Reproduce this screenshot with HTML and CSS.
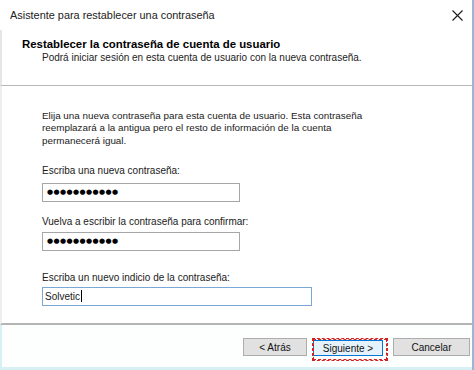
FILE: index.html
```html
<!DOCTYPE html>
<html lang="es">
<head>
<meta charset="utf-8">
<title>Asistente para restablecer una contraseña</title>
<link rel="stylesheet" href="styles.css">
</head>
<body>
<div class="window">
  <div class="titlebar">
    <span class="title">Asistente para restablecer una contraseña</span>
    <svg class="close" width="11" height="11" viewBox="0 0 11 11"><path d="M0.5 0.5L10.5 10.5M10.5 0.5L0.5 10.5" stroke="#1a1a1a" stroke-width="1.1" fill="none"/></svg>
  </div>
  <div class="header">
    <div class="h-title">Restablecer la contraseña de cuenta de usuario</div>
    <div class="h-sub">Podrá iniciar sesión en esta cuenta de usuario con la nueva contraseña.</div>
  </div>
  <div class="content">
    <p class="intro">Elija una nueva contraseña para esta cuenta de usuario. Esta contraseña<br>reemplazará a la antigua pero el resto de información de la cuenta<br>permanecerá igual.</p>
    <div class="field f1">
      <label class="lbl">Escriba una nueva contraseña:</label>
      <div class="input pw">●●●●●●●●●●●</div>
    </div>
    <div class="field f2">
      <label class="lbl">Vuelva a escribir la contraseña para confirmar:</label>
      <div class="input pw">●●●●●●●●●●●</div>
    </div>
    <div class="field f3">
      <label class="lbl">Escriba un nuevo indicio de la contraseña:</label>
      <div class="input wide focus">Solvetic<span class="caret"></span></div>
    </div>
  </div>
  <div class="footer">
    <div class="btn back">&lt; Atrás</div>
    <div class="focusring"><div class="btn primary">Siguiente &gt;</div></div>
    <div class="btn cancel">Cancelar</div>
  </div>
</div>
</body>
</html>
```
FILE: styles.css
```css
html, body {
  margin: 0;
  padding: 0;
  background: #ffffff;
}
body {
  width: 474px;
  height: 370px;
  overflow: hidden;
  font-family: "Liberation Sans", Arial, sans-serif;
  font-size: 10px;
  color: #1a1a1a;
}
.window {
  box-sizing: border-box;
  width: 474px;
  height: 370px;
  border-right: 2px solid #9bb6d2;
  display: flex;
  flex-direction: column;
}
.titlebar {
  height: 30px;
  display: flex;
  align-items: center;
  justify-content: space-between;
  padding: 0 9px 0 10px;
  flex: none;
}
.title {
  font-family: "Liberation Sans", Arial, sans-serif;
  font-size: 10.9px;
  color: #222;
}
.header {
  height: 56px;
  box-sizing: border-box;
  border-bottom: 1px solid #b8b8b8;
  border-left: 2px solid #e6e6e6;
  padding: 8px 0 0 20px;
  flex: none;
}
.h-title {
  font-weight: bold;
  font-size: 11.4px;
  color: #000;
  line-height: 13px;
}
.h-sub {
  padding-left: 20px;
  line-height: 14px;
  color: #222;
}
.content {
  height: 239px;
  box-sizing: border-box;
  border-left: 2px solid #eeeeee;
  border-bottom: 2px solid #b4b4b4;
  padding: 24px 0 0 40px;
  flex: none;
}
.intro {
  margin: 0;
  line-height: 12.3px;
  font-size: 9.85px;
}
.lbl {
  display: block;
  line-height: 12px;
  margin-bottom: 6px;
}
.f1 {
  margin-top: 18px;
}
.f2 {
  margin-top: 14px;
}
.f2 .lbl {
  margin-bottom: 4px;
}
.f3 {
  margin-top: 21px;
}
.f3 .lbl {
  margin-bottom: 3px;
}
.input {
  box-sizing: border-box;
  width: 198px;
  height: 19px;
  border: 1px solid #a6a6a6;
  background: #fff;
  padding: 0 4px;
  display: flex;
  align-items: center;
}
.pw {
  font-family: "DejaVu Sans", sans-serif;
  font-size: 7px;
  letter-spacing: 0.4px;
  color: #000;
}
.wide {
  width: 270px;
}
.focus {
  border-color: #7aa7d6;
  padding-left: 2px;
}
.caret {
  display: inline-block;
  width: 1px;
  height: 12px;
  background: #000;
  margin-left: 1px;
}
.footer {
  flex: 1;
  border-left: 2px solid #d6f0f5;
  border-bottom: 3px solid #d6f0f5;
  background: #fdfefe;
  display: flex;
  align-items: flex-start;
  justify-content: flex-end;
  padding: 13px 2px 0 0;
}
.btn {
  box-sizing: border-box;
  height: 18px;
  border: 1px solid #adadad;
  background: #e1e1e1;
  display: flex;
  align-items: center;
  justify-content: center;
  font-size: 10px;
  color: #111;
}
.back {
  width: 64px;
  margin-right: 5px;
}
.cancel {
  width: 77px;
  margin-left: 5px;
}
.focusring {
  border: 1px dashed #d42020;
  outline: 1px dashed #d42020;
  outline-offset: -2px;
  padding: 1px 4px 4px 0;
}
.btn.primary {
  width: 70px;
  height: 16px;
  border: 1px solid #0078d7;
  background: #e5f1fb;
}
```
